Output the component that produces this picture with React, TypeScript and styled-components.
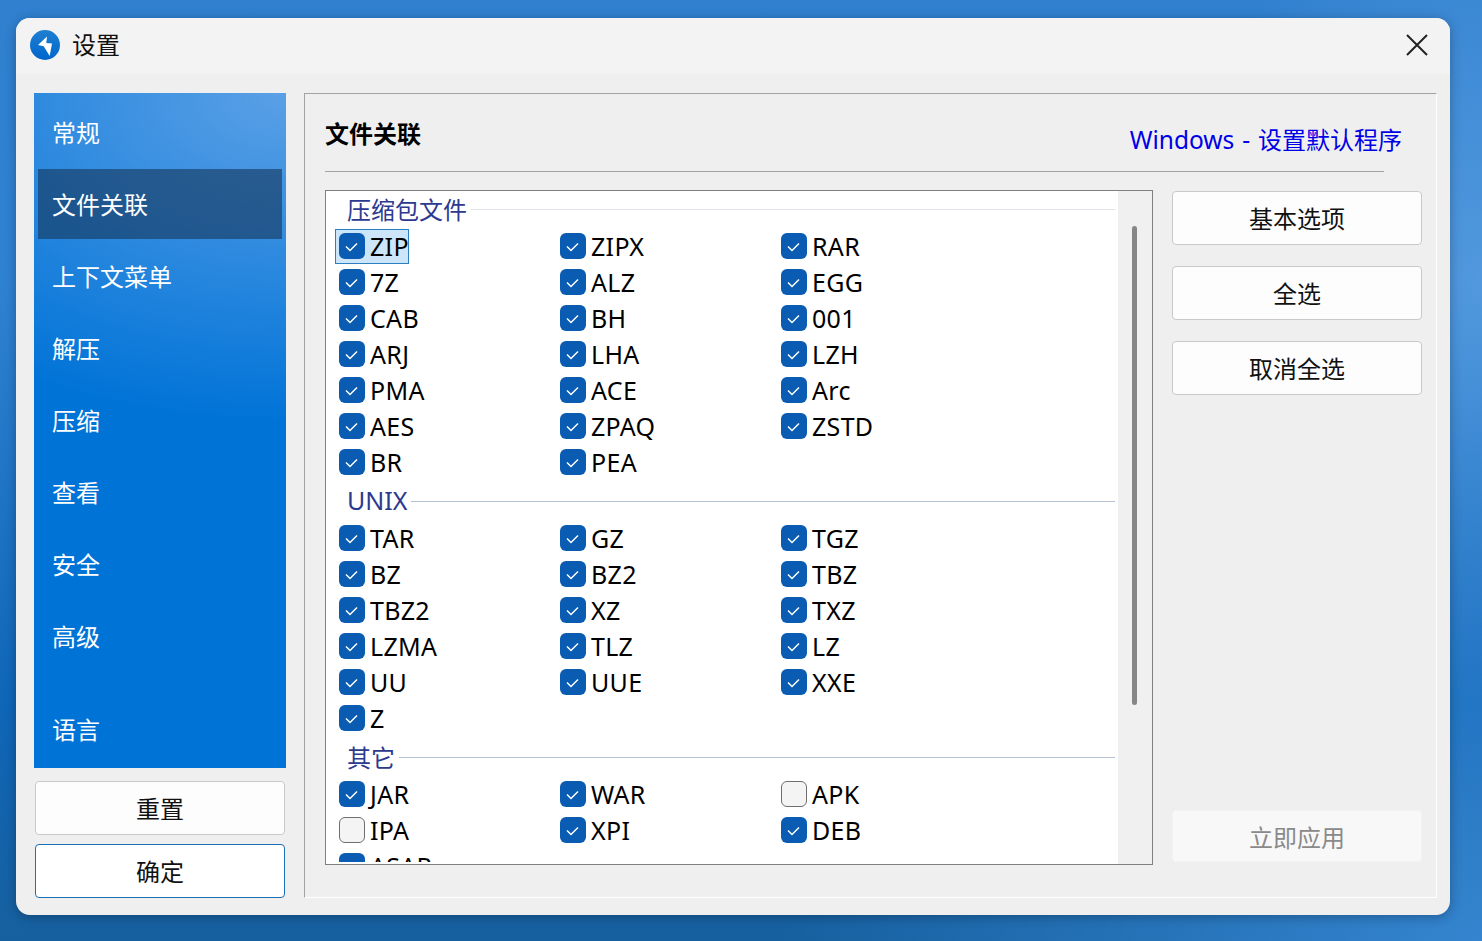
// React
import React from 'react'

// Components
import styled, { createGlobalStyle } from 'styled-components'

const FONT = `"Noto Sans", "Noto Sans CJK SC", sans-serif`

const NAV = ['常规', '文件关联', '上下文菜单', '解压', '压缩', '查看', '安全', '高级']

const GROUPS = [
    {
        title: '压缩包文件',
        items: ['ZIP', 'ZIPX', 'RAR', '7Z', 'ALZ', 'EGG', 'CAB', 'BH', '001', 'ARJ', 'LHA', 'LZH', 'PMA', 'ACE', 'Arc', 'AES', 'ZPAQ', 'ZSTD', 'BR', 'PEA'],
    },
    {
        title: 'UNIX',
        latin: true,
        items: ['TAR', 'GZ', 'TGZ', 'BZ', 'BZ2', 'TBZ', 'TBZ2', 'XZ', 'TXZ', 'LZMA', 'TLZ', 'LZ', 'UU', 'UUE', 'XXE', 'Z'],
    },
    {
        title: '其它',
        items: ['JAR', 'WAR', 'APK', 'IPA', 'XPI', 'DEB', 'ASAR'],
    },
]

const UNCHECKED = ['APK', 'IPA']

export default function App() {
    return (
        <Desktop>
            <GlobalStyle />
            <Window>
                <TitleBar>
                    <AppIcon viewBox="0 0 30 30">
                        <defs>
                            <linearGradient id="appBlue" x1="0" y1="0" x2="0" y2="1">
                                <stop offset="0" stopColor="#1f7fd0" />
                                <stop offset="1" stopColor="#0066cc" />
                            </linearGradient>
                        </defs>
                        <circle cx="15" cy="15" r="15" fill="url(#appBlue)" />
                        <path d="M17 6.5 L8 15 L13.7 16.2 L19.7 26 L22 13.5 L16.3 13 Z" fill="#fff" />
                    </AppIcon>
                    <WindowTitle>设置</WindowTitle>
                    <CloseIcon viewBox="0 0 22 22">
                        <path d="M1 1 L21 21 M21 1 L1 21" />
                    </CloseIcon>
                </TitleBar>

                <Body>
                    <LeftColumn>
                        <Sidebar>
                            {NAV.map(name => (
                                <NavItem key={name} $active={name === '文件关联'}>{name}</NavItem>
                            ))}
                            <LanguageItem>语言</LanguageItem>
                        </Sidebar>
                        <ResetButton>重置</ResetButton>
                        <OkButton>确定</OkButton>
                    </LeftColumn>

                    <Main>
                        <Header>
                            <PageTitle>文件关联</PageTitle>
                            <DefaultLink>
                                <LinkLatin>Windows - </LinkLatin>设置默认程序
                            </DefaultLink>
                        </Header>

                        <Content>
                            <ListBox>
                                <ListScroll>
                                    {GROUPS.map(group => (
                                        <Group key={group.title}>
                                            <GroupHead>
                                                <GroupTitle $latin={group.latin}>{group.title}</GroupTitle>
                                                <GroupLine $faint={group.title === '压缩包文件'} />
                                            </GroupHead>
                                            <Grid>
                                                {group.items.map(item => {
                                                    const checked = !UNCHECKED.includes(item)
                                                    return (
                                                        <Option key={item} $focused={item === 'ZIP'}>
                                                            <Box $checked={checked}>
                                                                {checked && (
                                                                    <svg width="26" height="26" viewBox="0 0 26 26">
                                                                        <path d="M7 13.5 L11 17.5 L18 10.5" fill="none" stroke="#fff" strokeWidth="1.5" />
                                                                    </svg>
                                                                )}
                                                            </Box>
                                                            <OptionLabel>{item}</OptionLabel>
                                                        </Option>
                                                    )
                                                })}
                                            </Grid>
                                        </Group>
                                    ))}
                                </ListScroll>
                                <ScrollTrack>
                                    <ScrollThumb />
                                </ScrollTrack>
                            </ListBox>

                            <Actions>
                                <ActionButton>基本选项</ActionButton>
                                <ActionButton>全选</ActionButton>
                                <ActionButton>取消全选</ActionButton>
                                <ApplyButton>立即应用</ApplyButton>
                            </Actions>
                        </Content>
                    </Main>
                </Body>
            </Window>
        </Desktop>
    )
}

const GlobalStyle = createGlobalStyle`
    html, body {
        margin: 0;
        padding: 0;
    }

    * {
        box-sizing: border-box;
    }
`

const Desktop = styled.div`
    background:
        radial-gradient(ellipse 300px 420px at 100% 30%, rgba(96,162,226,0.7) 0%, rgba(96,162,226,0) 100%),
        radial-gradient(ellipse 700px 500px at 100% 100%, #3484cf 0%, rgba(52,132,207,0) 100%),
        linear-gradient(180deg, #3080cf 0%, #2f82d2 30%, #0f66b8 75%, #17609f 100%);
    padding: 18px 32px 26px 16px;
    font-family: ${FONT};
    overflow: hidden;
    height: 941px;
    width: 1482px;
`

const Window = styled.div`
    box-shadow: 0 2px 12px rgba(0,0,0,0.28);
    flex-direction: column;
    background: #efefef;
    border-radius: 14px;
    overflow: hidden;
    display: flex;
    height: 897px;
`

const TitleBar = styled.div`
    background: #f3f3f3;
    align-items: center;
    padding: 0 22px 2px 14px;
    flex-shrink: 0;
    display: flex;
    height: 56px;
`

const AppIcon = styled.svg`
    margin-right: 12px;
    height: 30px;
    width: 30px;
`

const WindowTitle = styled.div`
    padding-bottom: 4px;
    font-size: 24px;
    color: #111;
    flex: 1;
`

const CloseIcon = styled.svg`
    fill: none;
    stroke: #222;
    stroke-width: 2;
    height: 22px;
    width: 22px;
`

const Body = styled.div`
    padding: 19px 13px 17px 18px;
    display: flex;
    flex: 1;
    gap: 18px;
    min-height: 0;
`

const LeftColumn = styled.div`
    flex-direction: column;
    flex-shrink: 0;
    display: flex;
    width: 252px;
`

const Sidebar = styled.div`
    background:
        radial-gradient(ellipse 520px 330px at 100% 0%, rgba(120,175,235,0.75) 0%, rgba(120,175,235,0) 100%),
        #0073d7;
    flex-direction: column;
    padding-top: 4px;
    margin-bottom: 13px;
    display: flex;
    height: 675px;
`

const NavItem = styled.div<{ $active?: boolean }>`
    background: ${p => p.$active ? 'rgba(22,54,88,0.6)' : 'transparent'};
    align-items: center;
    padding: 0 0 2px 14px;
    margin: 0 4px 2px;
    font-size: 24px;
    display: flex;
    color: #fff;
    height: 70px;
`

const LanguageItem = styled(NavItem)`
    margin-top: 21px;
`

const BaseButton = styled.div`
    justify-content: center;
    border: 1px solid #c9c9c9;
    background: #fdfdfd;
    padding-bottom: 2px;
    align-items: center;
    border-radius: 4px;
    font-size: 24px;
    flex-shrink: 0;
    display: flex;
    color: #111;
    height: 54px;
`

const ResetButton = styled(BaseButton)`
    margin: 0 1px 9px;
`

const OkButton = styled(BaseButton)`
    border-color: #1a6fb5;
    background: #fff;
    margin: 0 1px;
`

const Main = styled.div`
    border-bottom: 1px solid #fff;
    border-right: 1px solid #fff;
    border-left: 1px solid #a3a3a3;
    border-top: 1px solid #a3a3a3;
    flex-direction: column;
    padding: 0 14px 33px 20px;
    display: flex;
    flex: 1;
    min-width: 0;
`

const Header = styled.div`
    border-bottom: 1px solid #a3a3a3;
    justify-content: space-between;
    margin-right: 38px;
    padding-bottom: 1px;
    align-items: center;
    flex-shrink: 0;
    display: flex;
    height: 78px;
`

const PageTitle = styled.div`
    font-weight: 700;
    font-size: 24px;
    color: #000;
`

const DefaultLink = styled.div`
    margin-right: -18px;
    position: relative;
    font-size: 24px;
    color: #0000e6;
    top: 6px;
`

const LinkLatin = styled.span`
    word-spacing: 1.5px;
    font-size: 24.5px;
`

const Content = styled.div`
    margin-top: 18px;
    display: flex;
    flex: 1;
    gap: 19px;
    min-height: 0;
`

const ListBox = styled.div`
    border: 1px solid #808080;
    background: #fff;
    padding-bottom: 2px;
    flex-shrink: 0;
    display: flex;
    height: 675px;
    width: 828px;
`

const ListScroll = styled.div`
    overflow: hidden;
    flex: 1;
    min-width: 0;
`

const Group = styled.div`
    &:first-child {
        margin-top: -2px;
    }
`

const GroupHead = styled.div`
    align-items: center;
    padding: 0 3px 0 21px;
    display: flex;
    height: 40px;
    gap: 4px;
`

const GroupTitle = styled.div<{ $latin?: boolean }>`
    font-size: ${p => p.$latin ? '25px' : '24px'};
    padding-bottom: 2px;
    color: #2b3a8f;
`

const GroupLine = styled.div<{ $faint?: boolean }>`
    background: ${p => p.$faint ? '#dfe3e8' : '#b4c0d0'};
    height: 1px;
    flex: 1;
`

const Grid = styled.div`
    grid-template-columns: repeat(3, 221px);
    padding-left: 13px;
    display: grid;
`

const Option = styled.div<{ $focused?: boolean }>`
    background: ${p => p.$focused ? '#cde5f8' : 'transparent'};
    box-shadow: ${p => p.$focused ? 'inset 0 0 0 1px #2a80c0' : 'none'};
    height: ${p => p.$focused ? '35px' : '36px'};
    margin-bottom: ${p => p.$focused ? '1px' : '0'};
    width: ${p => p.$focused ? '74px' : 'auto'};
    justify-self: start;
    align-items: center;
    padding: 0 0 0 4px;
    margin-left: -4px;
    display: flex;
    gap: 5px;
`

const Box = styled.div<{ $checked: boolean }>`
    background: ${p => p.$checked ? '#0a5cb2' : '#f4f4f4'};
    border: ${p => p.$checked ? 'none' : '1.5px solid #6e6e6e'};
    border-radius: 6px;
    margin-bottom: 2px;
    flex-shrink: 0;
    height: 26px;
    width: 26px;
`

const OptionLabel = styled.div`
    letter-spacing: 0.3px;
    padding-bottom: 2px;
    font-size: 25px;
    color: #000;
`

const ScrollTrack = styled.div`
    background: #f0f0f0;
    justify-content: center;
    padding-top: 35px;
    flex-shrink: 0;
    display: flex;
    width: 34px;
    margin-bottom: -2px;
`

const ScrollThumb = styled.div`
    background: #868686;
    border-radius: 3px;
    margin-right: 1px;
    height: 479px;
    width: 5px;
`

const Actions = styled.div`
    flex-direction: column;
    margin: 1px 0;
    display: flex;
    width: 250px;
    gap: 21px;
`

const ActionButton = styled(BaseButton)``

const ApplyButton = styled(BaseButton)`
    border-color: #f3f3f3;
    background: #f8f8f8;
    padding-bottom: 0;
    margin-bottom: 1px;
    margin-top: auto;
    color: #8a8a8a;
    height: 52px;
`
